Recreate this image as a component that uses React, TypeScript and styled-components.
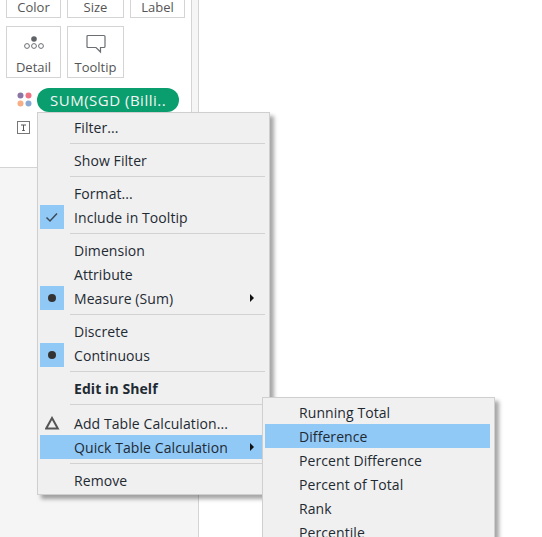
import React from 'react';
import styled, { createGlobalStyle } from 'styled-components';

const GlobalStyle = createGlobalStyle`
  html, body {
    margin: 0;
    padding: 0;
    background: #fff;
    overflow: hidden;
  }
  body {
    font-family: "Open Sans", "Noto Sans", sans-serif;
    font-size: 14px;
    color: #1f2a33;
  }
`;

function MenuRow({ label, mark, bold, arrow, active }: { label: string; mark?: 'check' | 'dot' | 'delta'; bold?: boolean; arrow?: boolean; active?: boolean }) {
  return (
    <Row $active={active}>
      <MarkBox $on={mark === 'check' || mark === 'dot'}>
        {mark === 'check' && (
          <svg width="14" height="14" viewBox="0 0 14 14">
            <path d="M1.5 7.5 L5 11 L12 3.5" fill="none" stroke="#3c4a57" strokeWidth="1.5" />
          </svg>
        )}
        {mark === 'dot' && <Dot />}
        {mark === 'delta' && (
          <svg width="15" height="14" viewBox="0 0 15 14">
            <path d="M7 2 L12.8 12.5 H1.2 Z" fill="none" stroke="#555" strokeWidth="2" />
          </svg>
        )}
      </MarkBox>
      <Label $bold={bold}>{label}</Label>
      {arrow && <Arrow />}
    </Row>
  );
}

function App() {
  return (
    <>
      <GlobalStyle />
      <Page>
        <Sidebar>
          <MarksCard>
            <CardGrid>
              <Tile $short>Color</Tile>
              <Tile $short $wide>Size</Tile>
              <Tile $short>Label</Tile>
            </CardGrid>
            <CardGrid>
              <Tile>
                <svg width="22" height="22" viewBox="0 0 22 22">
                  <circle cx="11" cy="5" r="2.8" fill="#5f6368" />
                  <circle cx="4" cy="12" r="2.4" fill="none" stroke="#6b6f73" />
                  <circle cx="11" cy="12" r="2.4" fill="none" stroke="#6b6f73" />
                  <circle cx="18" cy="12" r="2.4" fill="none" stroke="#6b6f73" />
                </svg>
                Detail
              </Tile>
              <Tile $wide>
                <svg width="22" height="22" viewBox="0 0 22 22">
                  <path d="M3 1.5 H19 Q20 1.5 20 2.5 V12.5 Q20 13.5 19 13.5 H15.5 V18 L11 13.5 H3 Q2 13.5 2 12.5 V2.5 Q2 1.5 3 1.5 Z" fill="none" stroke="#6b6f73" strokeWidth="1.2" />
                </svg>
                Tooltip
              </Tile>
            </CardGrid>
            <PillRow>
              <svg width="16" height="16" viewBox="0 0 16 16">
                <circle cx="3.5" cy="3.5" r="3" fill="#8b74a6" />
                <circle cx="11.5" cy="3.5" r="3" fill="#ee7384" />
                <circle cx="3.5" cy="11.5" r="3" fill="#f5ae85" />
                <circle cx="11.5" cy="11.5" r="3" fill="#8aaad3" />
              </svg>
              <Pill>SUM(SGD (Billi..</Pill>
            </PillRow>
            <TextIconRow>
              <svg width="14" height="14" viewBox="0 0 14 14">
                <rect x="0.5" y="0.5" width="12" height="12" fill="none" stroke="#777" />
                <path d="M4 4 H9 M6.5 4 V9.5 M5.2 9.5 H7.8" fill="none" stroke="#555" />
              </svg>
            </TextIconRow>
          </MarksCard>
        </Sidebar>

        <Menu>
          <MenuRow label="Filter..." />
          <Sep />
          <MenuRow label="Show Filter" />
          <Sep />
          <MenuRow label="Format..." />
          <MenuRow label="Include in Tooltip" mark="check" />
          <Sep />
          <MenuRow label="Dimension" />
          <MenuRow label="Attribute" />
          <MenuRow label="Measure (Sum)" mark="dot" arrow />
          <Sep />
          <MenuRow label="Discrete" />
          <MenuRow label="Continuous" mark="dot" />
          <Sep />
          <MenuRow label="Edit in Shelf" bold />
          <Sep $wide />
          <MenuRow label="Add Table Calculation..." mark="delta" />
          <MenuRow label="Quick Table Calculation" arrow active />
          <Sep />
          <MenuRow label="Remove" />
        </Menu>

        <SubMenu>
          <MenuRow label="Running Total" />
          <MenuRow label="Difference" active />
          <MenuRow label="Percent Difference" />
          <MenuRow label="Percent of Total" />
          <MenuRow label="Rank" />
          <MenuRow label="Percentile" />
        </SubMenu>
      </Page>
    </>
  );
}

const Page = styled.div`
  position: relative;
  width: 542px;
  height: 537px;
  overflow: hidden;
  background: #fff;
`;

const Sidebar = styled.div`
  width: 198px;
  height: 100%;
  background: #f5f5f5;
  border-right: 1px solid #d4d4d4;
`;

const MarksCard = styled.div`
  box-sizing: border-box;
  width: 192px;
  height: 168px;
  background: #fff;
  border-right: 1px solid #d4d4d4;
  border-bottom: 1px solid #d4d4d4;
  padding-left: 6px;
`;

const CardGrid = styled.div`
  display: flex;
  gap: 6px;
  margin-bottom: 8px;
`;

const Tile = styled.div<{ $short?: boolean; $wide?: boolean }>`
  box-sizing: border-box;
  width: ${(p) => (p.$wide ? '57px' : '55px')};
  height: ${(p) => (p.$short ? '18px' : '52px')};
  padding-bottom: ${(p) => (p.$short ? '3px' : '0')};
  border: 1px solid #d4d4d4;
  border-top: ${(p) => (p.$short ? 'none' : '1px solid #d4d4d4')};
  display: flex;
  flex-direction: column;
  align-items: center;
  justify-content: flex-end;
  font-size: 13px;
  line-height: ${(p) => (p.$short ? '14px' : '20px')};
  color: #555;
  background: #fff;

  svg {
    margin-bottom: 1px;
  }
`;

const PillRow = styled.div`
  display: flex;
  align-items: center;
  gap: 4px;
  padding-left: 11px;
  margin-top: 10px;
`;

const Pill = styled.div`
  width: 142px;
  height: 24px;
  box-sizing: border-box;
  border-radius: 12px;
  background: #0a9e6e;
  color: #f4f4f4;
  font-size: 15px;
  letter-spacing: 0.5px;
  line-height: 24px;
  padding-left: 13px;
  white-space: nowrap;
`;

const TextIconRow = styled.div`
  padding-left: 11px;
  margin-top: 8px;
`;

const Menu = styled.div`
  position: absolute;
  left: 37px;
  top: 112px;
  box-sizing: border-box;
  width: 233px;
  height: 383px;
  padding: 2px 3px 0 2px;
  background: #f0f0f0;
  border: 1px solid #cfcfcf;
  box-shadow: 4px 4px 4px rgba(0, 0, 0, 0.35);
`;

const SubMenu = styled(Menu)`
  left: 262px;
  top: 397px;
  width: 233px;
  height: 200px;
  padding: 2px 4px 0 2px;
`;

const Row = styled.div<{ $active?: boolean }>`
  display: flex;
  align-items: center;
  height: 24px;
  position: relative;
  background: ${(p) => (p.$active ? '#90c8f6' : 'transparent')};
`;

const MarkBox = styled.div<{ $on: boolean }>`
  width: 24px;
  height: 24px;
  flex: none;
  display: flex;
  align-items: center;
  justify-content: center;
  background: ${(p) => (p.$on ? '#90c8f6' : 'transparent')};
`;

const Dot = styled.div`
  width: 8px;
  height: 8px;
  border-radius: 50%;
  background: #333;
`;

const Label = styled.span<{ $bold?: boolean }>`
  margin-left: 10px;
  font-size: 14px;
  letter-spacing: 0.08px;
  line-height: 23px;
  font-weight: ${(p) => (p.$bold ? 700 : 400)};
  white-space: nowrap;
  color: #1f2a33;
`;

const Arrow = styled.div`
  position: absolute;
  right: 12px;
  top: 8px;
  width: 0;
  height: 0;
  border-left: 4px solid #111;
  border-top: 4px solid transparent;
  border-bottom: 4px solid transparent;
`;

const Sep = styled.div<{ $wide?: boolean }>`
  height: 1px;
  margin: 4px 1px ${(p) => (p.$wide ? '6px' : '4px')} 30px;
  background: #d2d2d2;
`;

export default App;
